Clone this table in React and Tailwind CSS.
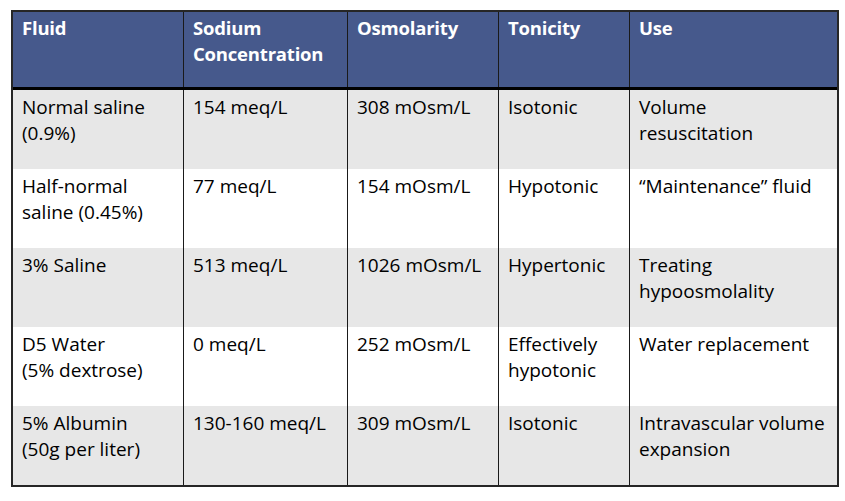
import React from "react";

const header = [["Fluid"], ["Sodium", "Concentration"], ["Osmolarity"], ["Tonicity"], ["Use"]];
const rows = [
  [["Normal saline", "(0.9%)"], ["154 meq/L"], ["308 mOsm/L"], ["Isotonic"], ["Volume", "resuscitation"]],
  [["Half-normal", "saline (0.45%)"], ["77 meq/L"], ["154 mOsm/L"], ["Hypotonic"], ["\u201cMaintenance\u201d fluid"]],
  [["3% Saline"], ["513 meq/L"], ["1026 mOsm/L"], ["Hypertonic"], ["Treating", "hypoosmolality"]],
  [["D5 Water", "(5% dextrose)"], ["0 meq/L"], ["252 mOsm/L"], ["Effectively", "hypotonic"], ["Water replacement"]],
  [["5% Albumin", "(50g per liter)"], ["130-160 meq/L"], ["309 mOsm/L"], ["Isotonic"], ["Intravascular volume", "expansion"]],
];

const grid = "grid grid-cols-[170px_164px_151px_131px_1fr]";

function Lines({ lines }) {
  return lines.map((l, i) => (
    <div key={i} className="whitespace-nowrap">{l}</div>
  ));
}

export default function App() {
  return (
    <div className="w-[845px] h-[501px] bg-white pt-[10px] pl-[11px]" style={{ fontFamily: "'Open Sans', sans-serif" }}>
      <div className="w-[828px] border-2 border-[#262626]">
        <div className={`${grid} h-[78px] bg-[#46598c] border-b-[3px] border-black text-white font-bold text-[18.5px] leading-[26px] tracking-[-0.2px]`}>
          {header.map((h, i) => (
            <div key={i} className={`pl-[9px] pt-[3px] ${i > 0 ? "border-l border-[#1a1a1a]" : ""}`}>
              <Lines lines={h} />
            </div>
          ))}
        </div>
        {rows.map((r, ri) => (
          <div key={ri} className={`${grid} h-[79px] ${ri % 2 === 0 ? "bg-[#e7e7e7]" : "bg-white"} text-black text-[19px] leading-[26px]`}>
            {r.map((c, i) => (
              <div key={i} className={`pl-[9px] pt-[4px] ${i > 0 ? "border-l border-[#1a1a1a]" : ""}`}>
                <Lines lines={c} />
              </div>
            ))}
          </div>
        ))}
      </div>
    </div>
  );
}
